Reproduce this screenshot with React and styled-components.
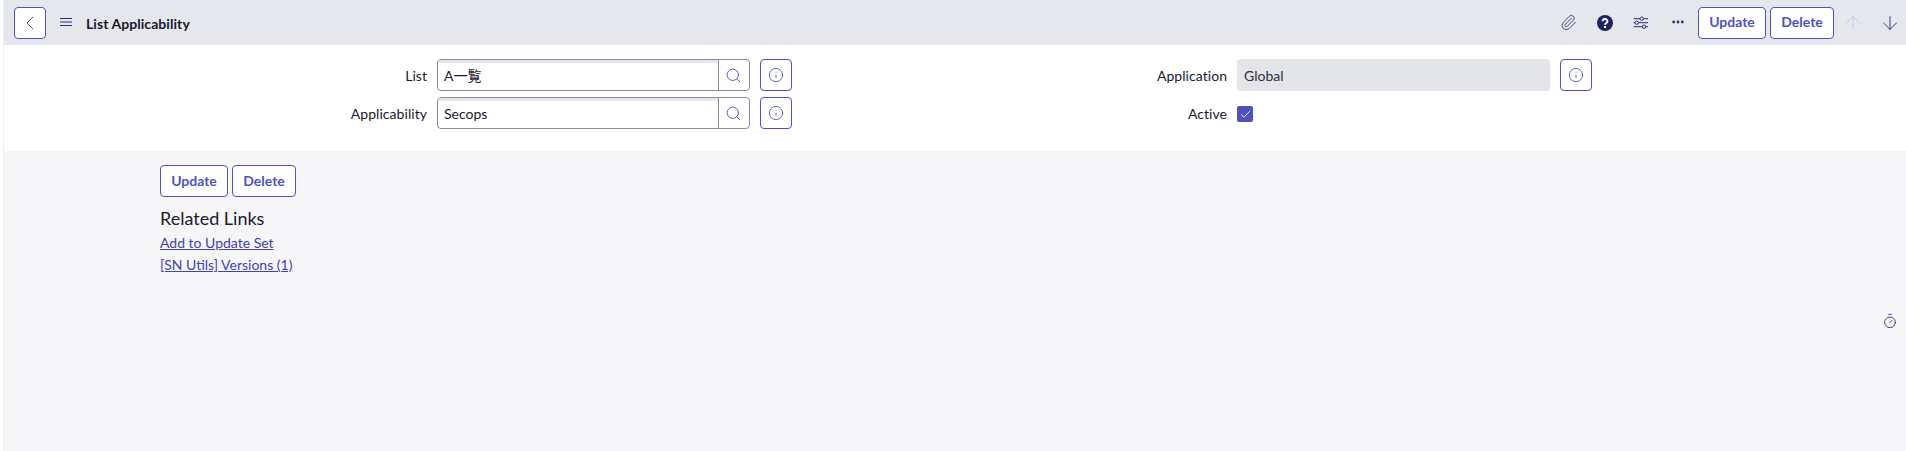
import React from "react";
import styled, { createGlobalStyle } from "styled-components";
import { ArrowDown, ArrowUp, Check, ChevronLeft, Info, Paperclip, Search, Timer } from "lucide-react";

const Global = createGlobalStyle`
  html, body { margin: 0; padding: 0; background: #fff; }
  body { font-family: Lato, "Noto Sans CJK JP", sans-serif; color: #181a2c; }
  * { box-sizing: border-box; }
`;

const Page = styled.div`
  position: relative;
  width: 1906px;
  height: 451px;
  padding-left: 3px;
  overflow: hidden;
  background: #fff;
`;
const Main = styled.div`
  height: 100%;
  display: flex;
  flex-direction: column;
  border-left: 1px solid #f0f0f2;
  background: #f6f6f9;
`;
const Header = styled.header`
  height: 45px;
  flex: none;
  display: flex;
  align-items: center;
  padding: 0 0 0 10px;
  background: #e6e7ec;
`;
const Title = styled.h1`
  margin: 0;
  font-size: 14px;
  font-weight: 700;
  line-height: 20px;
  letter-spacing: 0.06px;
  color: #181a2c;
  transform: translateY(1px);
`;
const IconSlot = styled.span`
  width: ${(p) => p.$w || 36}px;
  height: 32px;
  flex: none;
  display: inline-flex;
  align-items: center;
  justify-content: center;
  color: ${(p) => p.$color || "#2b2f70"};
`;
const Spacer = styled.div`
  flex: 1;
`;
const Actions = styled.div`
  display: flex;
  align-items: center;
  gap: 4px;
`;
const Button = styled.button`
  height: 32px;
  width: ${(p) => p.$w}px;
  padding: 0 0 2px;
  border: 1px solid #4f52bd;
  border-radius: 4px;
  background: #fff;
  color: #4f52bd;
  font: 700 14px Lato, sans-serif;
`;
const SquareButton = styled(Button)`
  width: 32px;
  padding: 0;
  flex: none;
  display: inline-flex;
  align-items: center;
  justify-content: center;
`;
const FormSection = styled.section`
  height: 106px;
  flex: none;
  padding-top: 14px;
  display: grid;
  grid-template-columns: 800px 800px;
  background: #fff;
`;
const Column = styled.div`
  display: flex;
  flex-direction: column;
  gap: 6px;
`;
const Row = styled.div`
  height: 32px;
  display: grid;
  grid-template-columns: 423px 313px 32px;
  column-gap: 10px;
  align-items: center;
`;
const Label = styled.label`
  text-align: right;
  font-size: 14px;
  line-height: 20px;
  letter-spacing: 0.05px;
  color: #181a2c;
  transform: translateY(1px);
`;
const InputGroup = styled.div`
  height: 32px;
  display: flex;
  border: 1px solid #8a8d99;
  border-radius: 4px;
  background: #fff;
  overflow: hidden;
`;
const InputValue = styled.div`
  flex: 1;
  padding: 2px 0 0 6px;
  border-right: 1px solid #8a8d99;
  box-shadow: inset 0 3px 0 #e6e7ec;
  font-size: 14px;
  line-height: 28px;
  color: #181a2c;
`;
const SearchSlot = styled.div`
  width: 30px;
  padding-right: 1px;
  display: flex;
  align-items: center;
  justify-content: center;
  color: #4f52bd;
`;
const ReadOnly = styled.div`
  height: 32px;
  padding: 1px 0 0 7px;
  border-radius: 4px;
  background: #e4e5e9;
  font-size: 14px;
  line-height: 32px;
  color: #2c2f3d;
`;
const CheckBox = styled.span`
  width: 16px;
  height: 16px;
  display: inline-flex;
  align-items: center;
  justify-content: center;
  border-radius: 2px;
  background: #4f52bd;
  color: #fff;
  transform: translateY(1px);
`;
const Body = styled.div`
  padding: 14px 0 0 156px;
`;
const Heading = styled.h2`
  margin: 9px 0 0;
  font-size: 18px;
  font-weight: 400;
  line-height: 24px;
  color: #181a2c;
`;
const LinkList = styled.div`
  margin-top: 3px;
  display: flex;
  flex-direction: column;
  gap: 2px;
`;
const TextLink = styled.a`
  width: max-content;
  font-size: 14px;
  line-height: 20px;
  color: #3f43ad;
  text-decoration: underline;
`;
const TimerBadge = styled.span`
  position: absolute;
  left: 1882px;
  top: 313px;
  width: 16px;
  height: 16px;
  display: flex;
  color: #2b2f70;
`;

const Burger = () => (
  <svg width="14" height="14" viewBox="0 0 14 14" fill="none" stroke="#2b2f70" strokeWidth="1">
    <path d="M1 2.5h12M1 6h12M1 9.5h12" />
  </svg>
);
const Help = () => (
  <svg width="16" height="16" viewBox="0 0 16 16">
    <circle cx="8" cy="8" r="8" fill="#20235f" />
    <path d="M5.6 6.2a2.4 2.2 0 1 1 3.6 1.9c-.8.5-1.2.8-1.2 1.7" fill="none" stroke="#fff" strokeWidth="1.9" />
    <rect x="7" y="11" width="2" height="2" fill="#fff" />
  </svg>
);
const Sliders = () => (
  <svg width="16" height="16" viewBox="0 0 16 16" fill="none" stroke="#2b2f70" strokeWidth="1">
    <path d="M.7 3.7h6.3M10.4 3.7h4.6M.7 7.7h1.3M5.4 7.7h9.6M.7 11.7h8.6M12.7 11.7h2.3" />
    <circle cx="8.7" cy="3.7" r="1.7" />
    <circle cx="3.7" cy="7.7" r="1.7" />
    <circle cx="11" cy="11.7" r="1.7" />
  </svg>
);
const Dots = () => (
  <svg width="14" height="14" viewBox="0 0 14 14" fill="#2b2f70">
    <circle cx="2.7" cy="6" r="1.4" />
    <circle cx="7" cy="6" r="1.4" />
    <circle cx="11.3" cy="6" r="1.4" />
  </svg>
);

const InfoButton = () => (
  <SquareButton type="button" aria-label="Info">
    <Info size={16} strokeWidth={1.3} />
  </SquareButton>
);
const LookupField = ({ label, value }) => (
  <Row>
    <Label>{label}</Label>
    <InputGroup>
      <InputValue>{value}</InputValue>
      <SearchSlot>
        <Search size={17} strokeWidth={1.3} />
      </SearchSlot>
    </InputGroup>
    <InfoButton />
  </Row>
);

export default function App() {
  return (
    <Page>
      <Global />
      <Main>
        <Header>
          <SquareButton type="button" aria-label="Back">
            <ChevronLeft size={24} strokeWidth={1} />
          </SquareButton>
          <IconSlot $w={40}>
            <Burger />
          </IconSlot>
          <Title>List Applicability</Title>
          <Spacer />
          <IconSlot $w={33}><Paperclip size={17} strokeWidth={1.2} /></IconSlot>
          <IconSlot $w={40}><Help /></IconSlot>
          <IconSlot $w={32}><Sliders /></IconSlot>
          <IconSlot $w={41}><Dots /></IconSlot>
          <Actions>
            <Button type="button" $w={68}>Update</Button>
            <Button type="button" $w={64}>Delete</Button>
          </Actions>
          <IconSlot $w={38} $color="#c8c9da"><ArrowUp size={22} strokeWidth={1} /></IconSlot>
          <IconSlot $w={34} $color="#2b2f70" style={{ paddingLeft: 1 }}><ArrowDown size={22} strokeWidth={1} /></IconSlot>
        </Header>
        <FormSection>
          <Column>
            <LookupField label="List" value="A一覧" />
            <LookupField label="Applicability" value="Secops" />
          </Column>
          <Column>
            <Row>
              <Label>Application</Label>
              <ReadOnly>Global</ReadOnly>
              <InfoButton />
            </Row>
            <Row>
              <Label>Active</Label>
              <CheckBox>
                <Check size={13} strokeWidth={1.6} />
              </CheckBox>
            </Row>
          </Column>
        </FormSection>
        <Body>
          <Actions>
            <Button type="button" $w={68}>Update</Button>
            <Button type="button" $w={64}>Delete</Button>
          </Actions>
          <Heading>Related Links</Heading>
          <LinkList>
            <TextLink>Add to Update Set</TextLink>
            <TextLink>[SN Utils] Versions (1)</TextLink>
          </LinkList>
        </Body>
      </Main>
      <TimerBadge>
        <Timer size={16} strokeWidth={1.3} />
      </TimerBadge>
    </Page>
  );
}
